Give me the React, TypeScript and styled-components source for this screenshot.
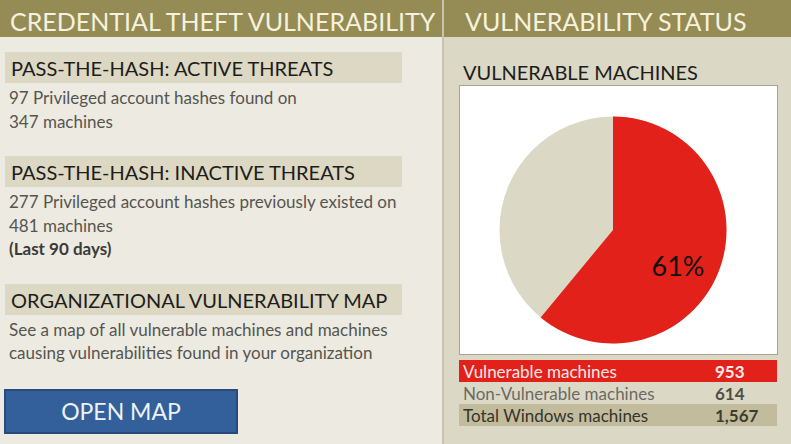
import styled, { createGlobalStyle } from "styled-components";

const GlobalStyle = createGlobalStyle`
  html, body {
    margin: 0;
    padding: 0;
    background: #edeae1;
  }
  body {
    font-family: Lato, "Open Sans", sans-serif;
  }
`;

const PIE = { cx: 153, cy: 144, r: 113.5 };

const wedgePath = (percent: number) => {
  const angle = (percent / 100) * Math.PI * 2;
  const x = PIE.cx + PIE.r * Math.sin(angle);
  const y = PIE.cy - PIE.r * Math.cos(angle);
  const large = percent > 50 ? 1 : 0;
  return `M ${PIE.cx} ${PIE.cy} L ${PIE.cx} ${PIE.cy - PIE.r} A ${PIE.r} ${PIE.r} 0 ${large} 1 ${x} ${y} Z`;
};

const legend = [
  { label: "Vulnerable machines", value: "953", tone: "red" },
  { label: "Non-Vulnerable machines", value: "614", tone: "plain" },
  { label: "Total Windows machines", value: "1,567", tone: "total" },
] as const;

const App = () => {
  return (
    <>
      <GlobalStyle />
      <Page>
        <LeftPanel>
          <Header>CREDENTIAL THEFT VULNERABILITY</Header>
          <LeftBody>
            <Section>
              <SectionTitle>PASS-THE-HASH: ACTIVE THREATS</SectionTitle>
              <Text>
                97 Privileged account hashes found on
                <br />
                347 machines
              </Text>
            </Section>
            <Section>
              <SectionTitle>PASS-THE-HASH: INACTIVE THREATS</SectionTitle>
              <Text>
                277 Privileged account hashes previously existed on
                <br />
                481 machines
                <br />
                <Strong>(Last 90 days)</Strong>
              </Text>
            </Section>
            <Section>
              <SectionTitle>ORGANIZATIONAL VULNERABILITY MAP</SectionTitle>
              <Text>
                See a map of all vulnerable machines and machines
                <br />
                causing vulnerabilities found in your organization
              </Text>
            </Section>
            <MapButton>OPEN MAP</MapButton>
          </LeftBody>
        </LeftPanel>
        <RightPanel>
          <Header $indent={21}>VULNERABILITY STATUS</Header>
          <RightBody>
            <ChartTitle>VULNERABLE MACHINES</ChartTitle>
            <ChartBox>
              <svg width="317" height="268" viewBox="0 0 317 268">
                <circle cx={PIE.cx} cy={PIE.cy} r={PIE.r} fill="#dcd8c6" />
                <path d={wedgePath(61)} fill="#e2211a" />
                <text
                  x="218"
                  y="190"
                  textAnchor="middle"
                  fontSize="27"
                  fontFamily="Lato, sans-serif"
                  fill="#111"
                >
                  61%
                </text>
              </svg>
            </ChartBox>
            <Legend>
              {legend.map((row) => (
                <LegendRow key={row.label} $tone={row.tone}>
                  <span>{row.label}</span>
                  <LegendValue $tone={row.tone}>{row.value}</LegendValue>
                </LegendRow>
              ))}
            </Legend>
          </RightBody>
        </RightPanel>
      </Page>
    </>
  );
};

const Page = styled.div`
  display: flex;
  width: 791px;
  height: 444px;
  overflow: hidden;
`;

const LeftPanel = styled.div`
  width: 442px;
  flex-shrink: 0;
  background-color: #edeae1;
  border-right: 2px solid #c9c4b0;
  display: flex;
  flex-direction: column;
`;

const RightPanel = styled.div`
  flex: 1;
  background-color: #dcd8c6;
  display: flex;
  flex-direction: column;
`;

const Header = styled.div<{ $indent?: number }>`
  height: 37px;
  flex-shrink: 0;
  background-color: #958b54;
  color: #f6f2de;
  font-size: 25px;
  line-height: 42px;
  padding-left: ${(props) => props.$indent ?? 10}px;
  white-space: nowrap;
  overflow: hidden;
`;

const LeftBody = styled.div`
  padding: 15px 0 0 5px;
  display: flex;
  flex-direction: column;
`;

const Section = styled.div`
  margin-bottom: 23px;
`;

const SectionTitle = styled.div`
  width: 391px;
  height: 31px;
  background-color: #dcd8c4;
  color: #1d1d1b;
  font-size: 20px;
  line-height: 33px;
  padding-left: 6px;
  white-space: nowrap;
`;

const Text = styled.div`
  color: #555550;
  font-size: 17px;
  line-height: 23.5px;
  padding: 3px 0 0 4px;
  white-space: nowrap;
`;

const Strong = styled.span`
  font-weight: 700;
  color: #3b3b38;
`;

const MapButton = styled.button`
  margin: 1px 0 0 -1px;
  width: 234px;
  height: 45px;
  background-color: #33609a;
  border: 2px solid #284c7a;
  color: #eef2f7;
  font-family: Lato, sans-serif;
  font-size: 23px;
  padding: 0;
  cursor: pointer;
`;

const RightBody = styled.div`
  padding: 0 0 0 15px;
  display: flex;
  flex-direction: column;
`;

const ChartTitle = styled.div`
  font-size: 20px;
  color: #1d1d1b;
  height: 48px;
  line-height: 70px;
  padding-left: 4px;
  white-space: nowrap;
`;

const ChartBox = styled.div`
  width: 317px;
  height: 268px;
  background-color: #ffffff;
  border: 1px solid #a7a396;
`;

const Legend = styled.div`
  margin-top: 5px;
  width: 318px;
  display: flex;
  flex-direction: column;
`;

const toneStyles = {
  red: { bg: "#e2211a", fg: "#fbe9e6", value: "#fbe9e6" },
  plain: { bg: "transparent", fg: "#6b6a64", value: "#4f4e48" },
  total: { bg: "#c3bc9c", fg: "#34332c", value: "#3d3c34" },
};

type Tone = keyof typeof toneStyles;

const LegendRow = styled.div<{ $tone: Tone }>`
  height: 22px;
  display: flex;
  align-items: center;
  padding-left: 4px;
  font-size: 17px;
  background-color: ${(props) => toneStyles[props.$tone].bg};
  color: ${(props) => toneStyles[props.$tone].fg};
`;

const LegendValue = styled.strong<{ $tone: Tone }>`
  margin-left: auto;
  width: 62px;
  font-weight: 700;
  color: ${(props) => toneStyles[props.$tone].value};
`;

export default App;
